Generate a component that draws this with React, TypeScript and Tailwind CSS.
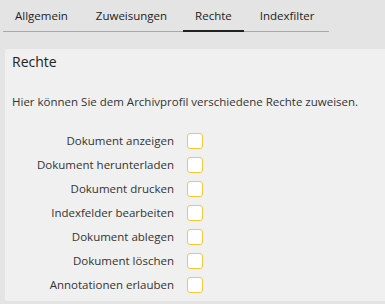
const tabs = ["Allgemein", "Zuweisungen", "Rechte", "Indexfilter"];

const rights = [
  "Dokument anzeigen",
  "Dokument herunterladen",
  "Dokument drucken",
  "Indexfelder bearbeiten",
  "Dokument ablegen",
  "Dokument löschen",
  "Annotationen erlauben",
];

export default function App() {
  return (
    <div className="w-[385px] h-[304px] overflow-hidden bg-[#e4e4e4] text-[#333] font-['Open_Sans',sans-serif]">
      <div className="ml-[3px] w-[326px] h-[32px] flex gap-[4px] border-b border-[#a9a9a9]">
        {tabs.map((t) => (
          <div
            key={t}
            className={
              "h-[32px] -mb-px px-3 pt-[7px] text-[11.5px] leading-[18px] text-[#222] " +
              (t === "Rechte" ? "border-b-2 border-[#222]" : "")
            }
          >
            {t}
          </div>
        ))}
      </div>

      <div className="ml-[5px] mt-[17px] w-[400px] h-[252px] rounded-[3px] bg-[#f0f0f0] px-[7px] pt-[3px]">
        <h3 className="text-[14px] leading-[20px] text-[#222]">Rechte</h3>
        <p className="mt-[22px] text-[11.5px] leading-[16px]">
          Hier können Sie dem Archivprofil verschiedene Rechte zuweisen.
        </p>
        <div className="mt-[19px]">
          {rights.map((r) => (
            <label key={r} className="flex items-center h-[24px]">
              <span className="w-[162px] text-right text-[11.5px] leading-[24px]">{r}</span>
              <span className="ml-[13px] w-[16px] h-[16px] rounded-[3px] border border-[#f8c93c] bg-white" />
            </label>
          ))}
        </div>
      </div>
    </div>
  );
}
